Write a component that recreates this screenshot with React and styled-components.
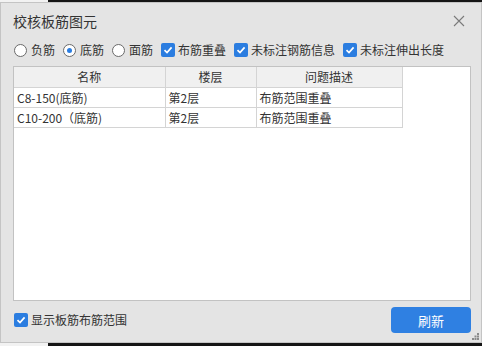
import React from 'react';
import styled, { createGlobalStyle } from 'styled-components';

const GlobalStyle = createGlobalStyle`
    html, body {
        margin: 0;
        padding: 0;
    }
    body {
        width: 482px;
        height: 346px;
        overflow: hidden;
        background: linear-gradient(to right, #f2f2f2 48px, #151515 48px);
        font-family: "Noto Sans CJK SC", "Noto Sans", sans-serif;
    }
`;

const Dialog = styled.div`
    box-sizing: border-box;
    margin-top: 2px;
    width: 482px;
    height: 341px;
    background: #e4e4e4;
    border: 1px solid #c4c4c4;
    padding: 0 10px 0 12px;
    display: flex;
    flex-direction: column;
    position: relative;
    color: #333;
`;

const Header = styled.div`
    height: 36px;
    display: flex;
    align-items: center;
    justify-content: space-between;
`;

const Title = styled.div`
    font-size: 14px;
    line-height: 16px;
    color: #333;
`;

const CloseBtn = styled.button`
    border: none;
    background: none;
    padding: 0;
    margin-right: 6px;
    width: 12px;
    height: 12px;
    display: flex;
    cursor: pointer;
`;

const OptionsRow = styled.div`
    height: 22px;
    display: flex;
    align-items: center;
    gap: 8px;
    padding-left: 1px;
`;

const Option = styled.label`
    display: flex;
    align-items: center;
    gap: ${p => (p.$check ? '3px' : '4px')};
    font-size: 12px;
    line-height: 14px;
    color: #333;
`;

const Radio = styled.span`
    box-sizing: border-box;
    width: 13px;
    height: 13px;
    border-radius: 50%;
    border: 1px solid #6a6a6a;
    background: #fff;
    display: flex;
    align-items: center;
    justify-content: center;
    &::after {
        content: '';
        width: 5px;
        height: 5px;
        border-radius: 50%;
        background: ${p => (p.$on ? '#2b7de0' : 'transparent')};
    }
`;

const CheckBox = styled.span`
    width: 14px;
    height: 14px;
    border-radius: 2px;
    background: #2b7de0;
    display: flex;
    align-items: center;
    justify-content: center;
`;

const Panel = styled.div`
    box-sizing: border-box;
    margin-top: 5px;
    height: 235px;
    background: #fff;
    border: 1px solid #c2c2c2;
`;

const Grid = styled.table`
    border-collapse: collapse;
    table-layout: fixed;
    font-size: 12px;
`;

const HeadCell = styled.th`
    height: 20px;
    padding: 0;
    font-weight: normal;
    text-align: center;
    background: #f0f0f0;
    border-right: 1px solid #d4d4d4;
    border-bottom: 1px solid #d4d4d4;
    color: #333;
    line-height: 14px;
`;

const Cell = styled.td`
    height: 19px;
    padding: 0 0 0 3px;
    border-right: 1px solid #d4d4d4;
    border-bottom: 1px solid #d4d4d4;
    color: #333;
    line-height: 14px;
    white-space: nowrap;
`;

const Footer = styled.div`
    margin-top: 6px;
    height: 26px;
    display: flex;
    align-items: center;
    justify-content: space-between;
    padding-left: 1px;
`;

const RefreshBtn = styled.button`
    width: 80px;
    height: 26px;
    border: none;
    border-radius: 4px;
    background: #2f80e2;
    color: #fff;
    font-family: inherit;
    font-size: 13px;
    cursor: pointer;
`;

const Grip = styled.svg`
    position: absolute;
    right: 2px;
    bottom: 2px;
`;

const Check = () => (
    <CheckBox>
        <svg width="10" height="10" viewBox="0 0 10 10">
            <path d="M1.5 5.2 L4 7.6 L8.6 2.4" fill="none" stroke="#fff" strokeWidth="1.7" />
        </svg>
    </CheckBox>
);

const rows = [
    { name: 'C8-150(底筋)', floor: '第2层', desc: '布筋范围重叠' },
    { name: 'C10-200（底筋)', floor: '第2层', desc: '布筋范围重叠' },
];

export default function App() {
    return (
        <>
            <GlobalStyle />
            <Dialog>
                <Header>
                    <Title>校核板筋图元</Title>
                    <CloseBtn>
                        <svg width="12" height="12" viewBox="0 0 12 12">
                            <path d="M1 1 L11 11 M11 1 L1 11" stroke="#7a7a7a" strokeWidth="1.1" />
                        </svg>
                    </CloseBtn>
                </Header>
                <OptionsRow>
                    <Option><Radio />负筋</Option>
                    <Option><Radio $on />底筋</Option>
                    <Option><Radio />面筋</Option>
                    <Option $check><Check />布筋重叠</Option>
                    <Option $check><Check />未标注钢筋信息</Option>
                    <Option $check><Check />未标注伸出长度</Option>
                </OptionsRow>
                <Panel>
                    <Grid>
                        <colgroup>
                            <col style={{ width: 151 }} />
                            <col style={{ width: 91 }} />
                            <col style={{ width: 146 }} />
                        </colgroup>
                        <thead>
                            <tr>
                                <HeadCell>名称</HeadCell>
                                <HeadCell>楼层</HeadCell>
                                <HeadCell>问题描述</HeadCell>
                            </tr>
                        </thead>
                        <tbody>
                            {rows.map(r => (
                                <tr key={r.name}>
                                    <Cell>{r.name}</Cell>
                                    <Cell>{r.floor}</Cell>
                                    <Cell>{r.desc}</Cell>
                                </tr>
                            ))}
                        </tbody>
                    </Grid>
                </Panel>
                <Footer>
                    <Option $check><Check />显示板筋布筋范围</Option>
                    <RefreshBtn>刷新</RefreshBtn>
                </Footer>
                <Grip width="7" height="7" viewBox="0 0 7 7">
                    <rect x="5" y="0" width="2" height="2" fill="#8a8a8a" />
                    <rect x="2.5" y="2.5" width="2" height="2" fill="#8a8a8a" />
                    <rect x="5" y="2.5" width="2" height="2" fill="#8a8a8a" />
                    <rect x="0" y="5" width="2" height="2" fill="#8a8a8a" />
                    <rect x="2.5" y="5" width="2" height="2" fill="#8a8a8a" />
                    <rect x="5" y="5" width="2" height="2" fill="#8a8a8a" />
                </Grip>
            </Dialog>
        </>
    );
}
